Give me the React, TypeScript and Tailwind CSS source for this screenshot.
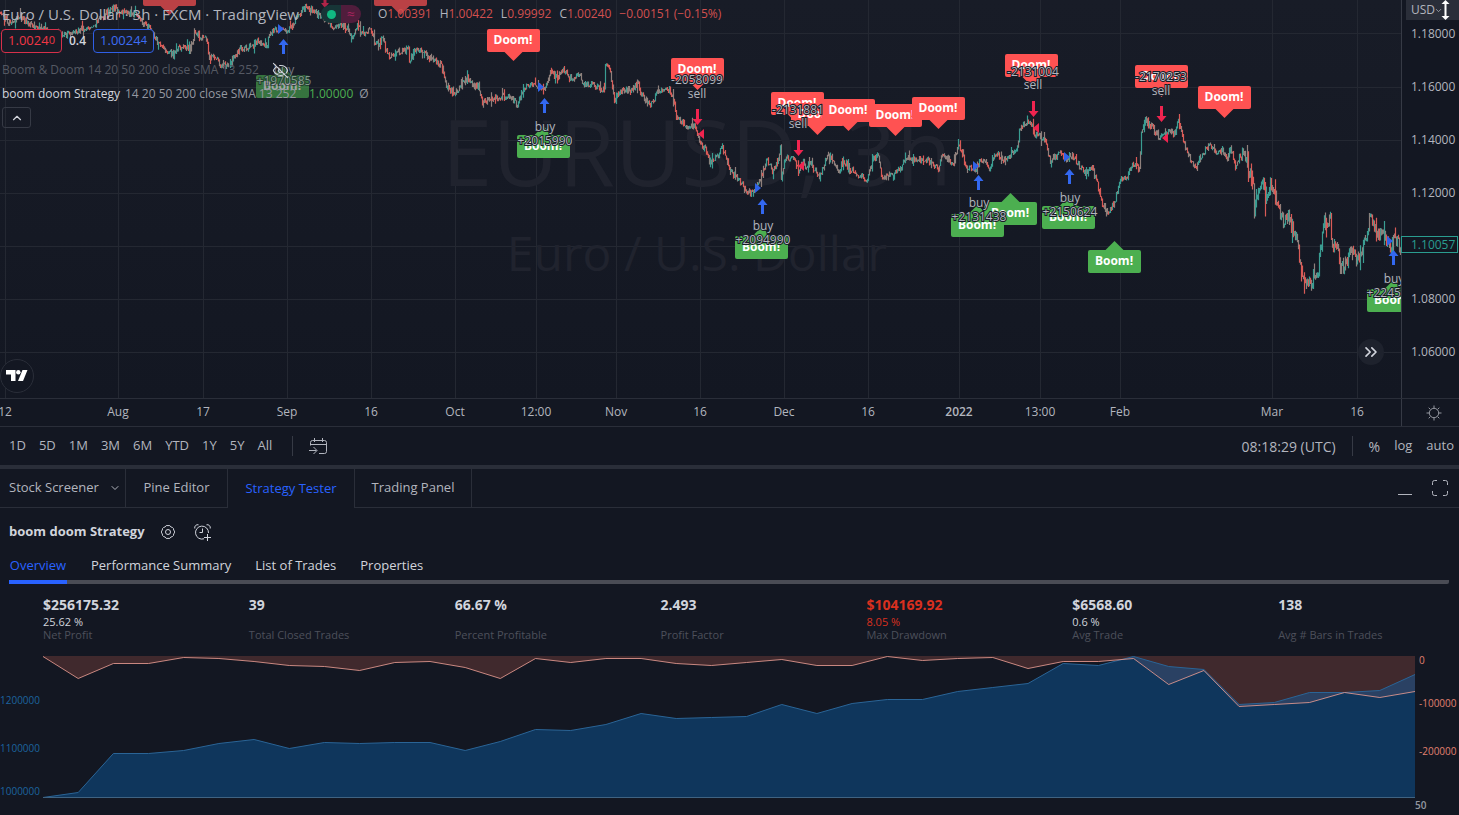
import type { ReactNode } from "react";
import { ChevronDown, ChevronUp, ChevronsRight, EyeOff } from "lucide-react";
import clsx from "clsx";

const CHART_W = 1401;
const CHART_H = 398;

const TIME_TICKS: [number, string, boolean?][] = [
  [5, "12"],
  [118, "Aug"],
  [203, "17"],
  [287, "Sep"],
  [371, "16"],
  [455, "Oct"],
  [536, "12:00"],
  [616, "Nov"],
  [700, "16"],
  [784, "Dec"],
  [868, "16"],
  [959, "2022", true],
  [1040, "13:00"],
  [1120, "Feb"],
  [1272, "Mar"],
  [1357, "16"],
];

const PRICE_LINES = [33, 87, 140, 193, 246, 299, 352];

// Turning points of the price series, x and y in chart units
const PRICE_POINTS: [number, number][] = [
  [0, 12], [8, 22], [20, 17], [35, 28], [50, 32], [65, 36], [80, 30], [90, 27], [105, 15], [113, 7], [122, 13],
  [135, 14], [140, 22], [150, 28], [153, 35], [158, 43], [165, 50], [173, 55], [178, 47], [190, 48], [194, 33],
  [207, 41], [208, 56], [215, 57], [220, 65], [227, 66], [232, 60], [238, 50], [248, 48], [257, 42], [267, 47],
  [269, 33], [275, 31], [280, 28], [286, 33], [290, 28], [298, 16], [306, 6], [318, 14], [325, 20], [331, 24],
  [333, 30], [339, 26], [346, 26], [351, 38], [357, 27], [363, 33], [368, 30], [372, 32], [374, 42], [378, 44],
  [383, 37], [385, 51], [390, 56], [395, 52], [404, 51], [408, 48], [409, 62], [414, 50], [418, 49], [427, 56],
  [432, 60], [441, 64], [446, 86], [453, 94], [460, 87], [467, 78], [473, 86], [478, 86], [482, 102], [490, 98],
  [500, 98], [508, 94], [513, 100], [517, 105], [523, 89], [530, 84], [536, 87], [540, 88], [543, 90], [550, 72],
  [558, 77], [563, 70], [570, 79], [580, 72], [582, 86], [590, 84], [595, 87], [604, 90], [605, 63], [609, 66],
  [614, 100], [620, 91], [630, 90], [638, 83], [641, 95], [650, 105], [658, 92], [665, 88], [669, 90], [673, 98],
  [675, 114], [680, 122], [689, 128], [694, 123], [697, 134], [700, 145], [705, 149], [709, 163], [716, 157],
  [722, 147], [726, 160], [730, 170], [737, 180], [742, 185], [750, 193], [755, 187], [759, 182], [763, 170],
  [767, 160], [773, 173], [778, 158], [780, 147], [781, 180], [785, 158], [795, 160], [798, 170], [803, 161],
  [806, 170], [810, 162], [818, 178], [828, 155], [833, 160], [838, 172], [843, 160], [850, 170], [858, 175],
  [862, 177], [866, 183], [872, 160], [878, 154], [882, 180], [890, 173], [900, 170], [905, 158], [915, 160],
  [925, 160], [930, 162], [938, 168], [942, 152], [950, 162], [953, 164], [958, 145], [963, 158], [966, 167],
  [975, 170], [980, 158], [990, 168], [996, 152], [1003, 160], [1008, 157], [1017, 148], [1019, 132], [1024, 123],
  [1030, 121], [1035, 135], [1045, 140], [1050, 160], [1060, 153], [1067, 160], [1072, 155], [1078, 165],
  [1085, 172], [1092, 168], [1098, 187], [1102, 205], [1108, 212], [1115, 200], [1120, 180], [1127, 177],
  [1132, 163], [1139, 170], [1141, 130], [1145, 120], [1152, 128], [1160, 138], [1166, 132], [1175, 133],
  [1178, 118], [1183, 141], [1189, 157], [1195, 168], [1202, 153], [1210, 145], [1215, 152], [1222, 150],
  [1227, 160], [1230, 147], [1235, 167], [1240, 155], [1245, 158], [1250, 175], [1253, 185], [1254, 214],
  [1258, 190], [1263, 175], [1265, 205], [1270, 185], [1274, 188], [1277, 205], [1283, 222], [1287, 213],
  [1293, 230], [1297, 242], [1300, 268], [1306, 288], [1312, 282], [1318, 270], [1322, 235], [1324, 222],
  [1330, 218], [1332, 250], [1337, 240], [1340, 270], [1346, 262], [1352, 245], [1357, 262], [1365, 240],
  [1370, 212], [1377, 235], [1385, 235], [1390, 250], [1394, 237], [1398, 240], [1400, 253],
];

function noise(n: number) {
  const v = Math.sin(n * 127.1 + 11.7) * 43758.5453;
  return v - Math.floor(v);
}

function priceAt(x: number) {
  const i = PRICE_POINTS.findIndex(([px]) => px >= x);
  if (i <= 0) return PRICE_POINTS[0][1];
  const [x0, y0] = PRICE_POINTS[i - 1];
  const [x1, y1] = PRICE_POINTS[i];
  return y0 + ((y1 - y0) * (x - x0)) / (x1 - x0);
}

// The last stretch of the series swings wider than the rest
const bars = { up: "", down: "", flat: "" };
let last = priceAt(0);
for (let x = 0; x < CHART_W; x++) {
  const swing = x > 1240 ? 2 : 1;
  const close = priceAt(x) + (noise(x) - 0.5) * 6 * swing;
  const reach = (noise(x + 5000) > 0.84 ? 7 : 2) * swing;
  const hi = Math.min(last, close) - noise(x + 900) * reach;
  const lo = Math.max(last, close) + noise(x + 1700) * reach;
  const kind = noise(x + 3000) < 0.4 ? "flat" : close < last ? "up" : "down";
  bars[kind] += `M${x + 0.5} ${hi.toFixed(1)}V${lo.toFixed(1)}`;
  last = close;
}

// center x, top y
const DOOMS: [number, number][] = [
  [169, -17], [400, -17], [513, 29], [697, 58], [797, 92], [817, 103], [848, 99], [895, 104],
  [938, 97], [1031, 54], [1161, 65], [1224, 86],
];
const BOOMS: [number, number][] = [
  [282, 75], [543, 135], [761, 236], [1010, 202], [977, 214], [1068, 206], [1114, 250], [1393, 289],
];

// x, arrow top, text baseline, quantity baseline
const BUYS: [number, number, number, number, string][] = [
  [283, 39, 74, 85, "+1970585"],
  [544, 98, 131, 145, "+2015990"],
  [762, 199, 230, 244, "+2094990"],
  [978, 175, 207, 221, "+2131438"],
  [1069, 169, 202, 216, "+2150624"],
  [1393, 250, 283, 297, "+2245990"],
];
const SELLS: [number, number, number, number, string][] = [
  [697, 109, 98, 84, "-2058099"],
  [798, 140, 128, 114, "-2131881"],
  [1033, 101, 89, 76, "-2131004"],
  [1161, 106, 95, 81, "-2170253"],
];

const ENTRY_MARKS = [[280, 29], [540, 87], [757, 188], [975, 166], [1066, 157], [1389, 241]];
const EXIT_MARKS = [[701, 134], [801, 166], [1036, 128], [1165, 138]];

function SignalText({ x, y, children }: { x: number; y: number; children: ReactNode }) {
  return (
    <text
      x={x}
      y={y}
      textAnchor="middle"
      className="fill-[#b2b5be] stroke-[#181c27] text-[12px] [paint-order:stroke]"
      strokeWidth={2}
    >
      {children}
    </text>
  );
}

function PriceChart() {
  return (
    <svg
      viewBox={`0 0 ${CHART_W} ${CHART_H}`}
      preserveAspectRatio="xMaxYMin slice"
      className="block h-full w-full"
      role="img"
      aria-label="EURUSD price chart"
    >
      <g stroke="#242832">
        {TIME_TICKS.map(([x]) => (
          <path key={x} d={`M${x + 0.5} 0V${CHART_H}`} />
        ))}
        {PRICE_LINES.map((y) => (
          <path key={y} d={`M0 ${y + 0.5}H${CHART_W}`} />
        ))}
      </g>
      <g textAnchor="middle" className="fill-[#20232e]">
        <text x={697} y={186} className="text-[91px]">
          EURUSD, 3h
        </text>
        <text x={697} y={271} className="text-[48px]">
          Euro / U.S. Dollar
        </text>
      </g>

      <g fill="none" strokeWidth={1.2}>
        <path d={bars.flat} stroke="#8f807c" />
        <path d={bars.up} stroke="#3a9d92" />
        <path d={bars.down} stroke="#d95b57" />
      </g>

      <g textAnchor="middle" className="text-[12px] font-bold">
        {DOOMS.map(([x, y]) => (
          <g key={x} opacity={y < 0 ? 0.7 : 1}>
            <rect x={x - 26} y={y} width={53} height={23} rx={2} fill="#ff5252" />
            <path d={`M${x - 8.5} ${y + 23}h18l-9 9z`} fill="#ff5252" />
            <text x={x} y={y + 15} fill="#fff">
              Doom!
            </text>
          </g>
        ))}
        {BOOMS.map(([x, y]) => (
          <g key={x} opacity={x === 282 ? 0.6 : 1}>
            <rect x={x - 26} y={y} width={53} height={23} rx={2} fill="#4caf50" />
            <path d={`M${x - 8.5} ${y}h18l-9 -9z`} fill="#4caf50" />
            <text x={x} y={y + 15} fill="#fff">
              Boom!
            </text>
          </g>
        ))}
      </g>

      {BUYS.map(([x, top, ty, qy, qty]) => (
        <g key={x}>
          <path d={`M${x + 0.5} ${top}l5 6h-3.5v9h-3v-9h-3.5z`} fill="#3368f0" />
          <g opacity={x === 283 ? 0.6 : 1}>
            <SignalText x={x + 1} y={ty}>buy</SignalText>
            <SignalText x={x + 1} y={qy}>{qty}</SignalText>
          </g>
        </g>
      ))}
      {SELLS.map(([x, top, ty, qy, qty]) => (
        <g key={x}>
          <path d={`M${x + 0.5} ${top + 16}l5 -6h-3.5v-10h-3v10h-3.5z`} fill="#f0244f" />
          <SignalText x={x} y={ty}>sell</SignalText>
          <SignalText x={x} y={qy}>{qty}</SignalText>
        </g>
      ))}
      <path d="M325 8l4 -5h-2.5v-5h-3v5h-2.5z" fill="#b02448" />
      {ENTRY_MARKS.map(([x, y]) => (
        <path key={x} d={`M${x - 2} ${y - 5}l6 5l-6 5z`} fill="#2f62e8" />
      ))}
      {EXIT_MARKS.map(([x, y]) => (
        <path key={x} d={`M${x + 3} ${y - 5}l-6 5l6 5z`} fill="#f0244f" />
      ))}
    </svg>
  );
}

function Legend() {
  return (
    <div className="absolute top-0 left-0 text-[12px] whitespace-nowrap text-[#9598a1]">
      <div className="flex h-7 items-center">
        <h1 className="w-[321px] pl-[2px] text-[15px] text-[#b2b5be]">
          Euro / U.S. Dollar · 3h · FXCM · TradingView
        </h1>
        <div className="flex h-[18px] w-[40px] overflow-hidden rounded-full">
          <span className="flex w-1/2 items-center justify-center bg-[#173537]">
            <span className="size-[9px] rounded-full bg-[#10b981]" />
          </span>
          <span className="flex w-1/2 items-center justify-center bg-[#501d3c] text-[14px] leading-none text-[#a8245c]">
            ≈
          </span>
        </div>
        <dl className="ml-[17px] flex gap-2 text-[12px] text-[#d2504f]">
          {[
            ["O", "1.00391"],
            ["H", "1.00422"],
            ["L", "0.99992"],
            ["C", "1.00240"],
          ].map(([k, v]) => (
            <div key={k} className="flex">
              <dt className="text-[#b2b5be]">{k}</dt>
              <dd>{v}</dd>
            </div>
          ))}
          <dd>−0.00151 (−0.15%)</dd>
        </dl>
      </div>
      <div className="flex h-[26px] items-center pl-px">
        <button className="flex h-6 w-[61px] items-center justify-center rounded border border-[#d6304a] bg-[#181c27] text-[13px] text-[#f23645]">
          1.0024<span className="pb-[2px] text-[11px]">0</span>
        </button>
        <span className="w-[31px] text-center font-semibold text-[#d1d4dc]">0.4</span>
        <button className="flex h-6 w-[61px] items-center justify-center rounded border border-[#2f5fe6] bg-[#181c27] text-[13px] text-[#3d6df5]">
          1.0024<span className="pb-[2px] text-[11px]">4</span>
        </button>
      </div>
      <div className="flex h-8 items-center pl-[2px] text-[#555963]">
        <span className="w-[270px]">Boom &amp; Doom 14 20 50 200 close SMA 13 252</span>
        <button aria-label="Show indicator">
          <EyeOff size={17} strokeWidth={1.5} className="text-[#d1d4dc]" />
        </button>
      </div>
      <div className="flex h-4 items-center pl-[2px]">
        <span className="mr-[5px] text-[#d1d4dc]">boom doom Strategy</span>
        <span className="w-[184px]">14 20 50 200 close SMA 13 252</span>
        <span className="text-[#4caf50]">1.00000</span>
        <span className="ml-[6px]">Ø</span>
      </div>
      <button
        aria-label="Collapse legend"
        className="mt-[5px] ml-[2px] flex h-[21px] w-[29px] items-center justify-center rounded-[3px] border border-[#363a45]"
      >
        <ChevronUp size={14} className="text-[#d1d4dc]" />
      </button>
    </div>
  );
}

function PriceAxis() {
  return (
    <div className="relative border-l border-[#363a45] text-[12px] text-[#b2b5be]">
      <div className="relative ml-1 h-5 bg-[#2a2e39]">
        <select
          aria-label="Currency"
          className="h-5 w-full appearance-none bg-transparent pl-[5px] text-[12px] leading-5 outline-none"
        >
          <option>USD</option>
        </select>
        <ChevronDown size={9} className="pointer-events-none absolute top-[6px] left-[28px]" />
      </div>
      <div className="flex flex-col gap-[25px]">
        {["1.18000", "1.16000", "1.14000", "1.12000"].map((p) => (
          <span key={p} className="h-7 pl-[9px] leading-7">
            {p}
          </span>
        ))}
        <span className="flex h-7 items-center pb-[3px]">
          <span className="-ml-px h-[17px] w-full border border-[#2a9d90] bg-[#131722] pl-[9px] leading-[15px] text-[#2a9d90]">
            1.10057
          </span>
        </span>
        {["1.08000", "1.06000"].map((p) => (
          <span key={p} className="h-7 pl-[9px] leading-7">
            {p}
          </span>
        ))}
      </div>
      <svg className="absolute top-0 right-[9px]" width="9" height="20" viewBox="0 0 9 20" aria-hidden>
        <path d="M4.500 0L8.500 4H5.500V16H8.500L4.500 20L0.500 16H3.500V4H0.500Z" fill="#fff" />
      </svg>
    </div>
  );
}

function ChartPanel() {
  return (
    <section>
      <div className="grid h-[398px] grid-cols-[minmax(0,1fr)_58px]">
        <div className="relative overflow-hidden bg-linear-to-b from-[#181c27] to-[#131722]">
          <PriceChart />
          <Legend />
          <a
            href="#tradingview"
            aria-label="TradingView"
            className="absolute bottom-[5px] left-0 flex size-[34px] items-center justify-center rounded-full border border-[#2a2e39] bg-[#131722]"
          >
            <svg width="22" height="12" viewBox="0 0 22 12" fill="#fff" aria-hidden>
              <path d="M0 0H9.500V11H5V4.500H0Z" />
              <circle cx="12.300" cy="2.300" r="2.200" />
              <path d="M16.500 0H21.500L17 11H12Z" />
            </svg>
          </a>
          <button
            aria-label="Scroll to latest bar"
            className="absolute right-[17px] bottom-[33px] flex size-[26px] items-center justify-center rounded-full bg-[#1e222d] text-[#d1d4dc]"
          >
            <ChevronsRight size={20} />
          </button>
        </div>
        <PriceAxis />
      </div>
      <div className="grid h-[29px] grid-cols-[minmax(0,1fr)_58px] border-y border-[#2a2e39]">
        <svg
          viewBox="0 0 1401 27"
          preserveAspectRatio="xMaxYMid slice"
          className="block h-[27px] w-full"
          role="img"
          aria-label="Time axis"
        >
          {TIME_TICKS.map(([x, label, strong]) => (
            <text
              key={x}
              x={x}
              y={17}
              textAnchor="middle"
              className={clsx("fill-[#b2b5be] text-[12px]", strong && "font-semibold")}
            >
              {label}
            </text>
          ))}
        </svg>
        <button
          aria-label="Axis settings"
          className="flex items-center justify-center border-l border-[#363a45] pl-[6px] text-[#9598a1]"
        >
          <svg width="16" height="16" viewBox="0 0 16 16" fill="none" stroke="currentColor" aria-hidden>
            <circle cx="8" cy="8" r="4.700" />
            <path d="M8 .5v2.500M8 13v2.500M.5 8H3M13 8h2.500M2.700 2.700l1.700 1.700M11.600 11.600l1.700 1.700M2.700 13.300l1.700-1.700M11.600 4.400l1.700-1.700" />
          </svg>
        </button>
      </div>
    </section>
  );
}

function RangeBar() {
  return (
    <div className="flex h-[38px] items-center pr-[5px] pl-[9px] text-[13px] text-[#b2b5be]">
      <div className="flex gap-[13px]">
        {["1D", "5D", "1M", "3M", "6M", "YTD", "1Y", "5Y", "All"].map((r) => (
          <button key={r}>{r}</button>
        ))}
      </div>
      <span className="mr-4 ml-5 h-5 w-px bg-[#363a45]" />
      <button aria-label="Go to date">
        <svg width="18" height="17" viewBox="0 0 18 17" fill="none" stroke="currentColor" aria-hidden>
          <path d="M1.500 7.500V4.500a2 2 0 0 1 2-2h12a2 2 0 0 1 2 2v9a2 2 0 0 1-2 2H10M1.500 6.500h16M5.500 0v4M13.500 0v4M0 12.500h7.500M4.500 9l3.500 3.500L4.500 16" />
        </svg>
      </button>
      <button className="ml-auto text-[14px]">08:18:29 (UTC)</button>
      <span className="mx-4 h-5 w-px bg-[#363a45]" />
      <div className="flex items-center gap-[14px]">
        <button className="text-[14px]">%</button>
        <button>log</button>
        <button>auto</button>
      </div>
    </div>
  );
}

function PanelTabs() {
  const tab = "flex items-center justify-center border-r border-b border-[#2a2e39]";
  return (
    <nav className="flex h-[39px] text-[13px] text-[#b2b5be]">
      <button className="flex w-[126px] items-center justify-between border-r border-b border-[#2a2e39] pr-1 pl-[9px]">
        Stock Screener
        <ChevronDown size={12} />
      </button>
      <button className={clsx(tab, "w-[102px]")}>Pine Editor</button>
      <button className="flex w-[127px] items-center justify-center border-r border-[#2a2e39] text-[#2962ff]">
        Strategy Tester
      </button>
      <button className={clsx(tab, "w-[117px]")}>Trading Panel</button>
      <div className="flex flex-1 items-center justify-end gap-5 border-b border-[#2a2e39] pr-[11px]">
        <button aria-label="Minimize" className="flex h-4 w-[14px] items-end">
          <span className="mb-px h-px w-full bg-[#b2b5be]" />
        </button>
        <button aria-label="Maximize">
          <svg width="16" height="16" viewBox="0 0 16 16" fill="none" stroke="currentColor" aria-hidden>
            <path d="M.5 5V2.500a2 2 0 0 1 2-2H5M11 .5h2.500a2 2 0 0 1 2 2V5M15.500 11v2.500a2 2 0 0 1-2 2H11M5 15.500H2.500a2 2 0 0 1-2-2V11" />
          </svg>
        </button>
      </div>
    </nav>
  );
}

const STATS = [
  { value: "$256175.32", percent: "25.62 %", label: "Net Profit" },
  { value: "39", label: "Total Closed Trades" },
  { value: "66.67 %", label: "Percent Profitable" },
  { value: "2.493", label: "Profit Factor" },
  { value: "$104169.92", percent: "8.05 %", label: "Max Drawdown", negative: true },
  { value: "$6568.60", percent: "0.6 %", label: "Avg Trade" },
  { value: "138", label: "Avg # Bars in Trades" },
];

const DRAWDOWN = [
  0, 22, 7, 7, 1, 2, 5, 9, 10, 14, 6, 5, 11, 22, 2, 6, 2, 2, 7, 9, 6, 3, 9, 9, 0, 4, 2, 1, 12, 5, 5, 2, 28, 14, 50,
  48, 46, 36, 41, 35,
];
const EQUITY = [
  141, 136, 97, 97, 94, 87, 83, 92, 86, 87, 86, 86, 94, 85, 73, 74, 68, 57, 62, 61, 60, 48, 57, 47, 43, 43, 35, 31,
  27, 7, 9, 0, 10, 13, 48, 46, 36, 36, 34, 18,
];

function toLine(ys: number[]) {
  return ys.map((y, i) => `${((i * 1372) / (ys.length - 1)).toFixed(1)} ${y + 0.5}`).join("L");
}

function EquityChart() {
  const drawdown = toLine(DRAWDOWN);
  const equity = toLine(EQUITY);
  return (
    <div className="flex text-[10px] leading-3">
      <div className="flex w-[43px] shrink-0 flex-col pt-11 pr-[3px] text-right text-[#1c639f]">
        <span>1200000</span>
        <span className="mt-9">1100000</span>
        <span className="mt-[31px]">1000000</span>
      </div>
      <svg
        viewBox="0 0 1372 142"
        preserveAspectRatio="none"
        className="mt-[6px] h-[142px] min-w-0 flex-1"
        role="img"
        aria-label="Equity and drawdown"
      >
        <path d={`M0 0L${drawdown}L1372 0Z`} fill="#40292d" />
        <path d={`M0 142L${equity}L1372 142Z`} fill="#0b67b3" fillOpacity={0.4} />
        <path d={`M${equity}`} fill="none" stroke="#2a6496" vectorEffect="non-scaling-stroke" />
        <path d={`M${drawdown}`} fill="none" stroke="#e59a90" strokeOpacity={0.85} vectorEffect="non-scaling-stroke" />
        <path d="M0 141.500H1372" stroke="#3f6382" />
      </svg>
      <div className="flex w-11 shrink-0 flex-col pt-1 pl-1 text-[#e0806f]">
        <span>0</span>
        <span className="mt-[31px]">-100000</span>
        <span className="mt-9">-200000</span>
        <span className="mt-[42px] -ml-1 font-semibold text-[#9598a1]">50</span>
      </div>
    </div>
  );
}

function StrategyTester() {
  return (
    <section>
      <div className="flex h-[48px] items-center pl-[9px] text-[#d1d4dc]">
        <h2 className="w-[152px] text-[13px] font-bold">boom doom Strategy</h2>
        <button aria-label="Settings" className="mr-[19px]">
          <svg width="14" height="14" viewBox="0 0 14 14" fill="none" stroke="currentColor" aria-hidden>
            <path d="M5.200.6h3.600l1 1.300 1.700.6.9.900.300 1.700.8 1v1.800l-.8 1-.300 1.700-.900.900-1.700.600-1 1.300H5.200l-1-1.300-1.700-.600-.900-.900-.300-1.700-.8-1V6.100l.8-1 .300-1.700.900-.900 1.700-.600z" />
            <circle cx="7" cy="7" r="2.500" />
          </svg>
        </button>
        <button aria-label="Create alert">
          <svg width="17" height="17" viewBox="0 0 17 17" fill="none" stroke="currentColor" aria-hidden>
            <path d="M10 14.800A6.500 6.500 0 1 1 14.500 9M8.500 4.500V8.500H5.500M.8 4.500A3 3 0 0 1 4.500.8M12.500.8a3 3 0 0 1 3.700 3.700M13.500 10v7M10 13.500h7" />
          </svg>
        </button>
      </div>
      <div className="mr-[10px] ml-[9px] flex h-7 gap-6 rounded-[2px] border-b-4 border-[#4a4c55] text-[13px] text-[#d1d4dc]">
        <button className="-mb-1 flex w-[58px] justify-center border-b-4 border-[#2962ff] text-[#2962ff]">
          Overview
        </button>
        <button className="flex">Performance Summary</button>
        <button className="flex">List of Trades</button>
        <button className="flex">Properties</button>
      </div>
      <div className="mr-[18px] grid h-[66px] grid-cols-7 content-start pt-[11px]">
        {STATS.map((s) => (
          <div key={s.label} className={clsx("pl-[43px]", s.negative ? "text-[#d9301f]" : "text-[#d1d4dc]")}>
            <div className="h-5 text-[14px] leading-5 font-bold">{s.value}</div>
            <div className="h-[13px] text-[11px] leading-[13px]">{s.percent}</div>
            <div className="h-[13px] text-[11px] leading-[13px] text-[#4d505b]">{s.label}</div>
          </div>
        ))}
      </div>
      <EquityChart />
    </section>
  );
}

export default function App() {
  return (
    <main className="min-h-screen overflow-hidden bg-[#131722] font-['Open_Sans',sans-serif]">
      <ChartPanel />
      <RangeBar />
      <div className="h-1 bg-[#2a2e39]" />
      <PanelTabs />
      <StrategyTester />
    </main>
  );
}
